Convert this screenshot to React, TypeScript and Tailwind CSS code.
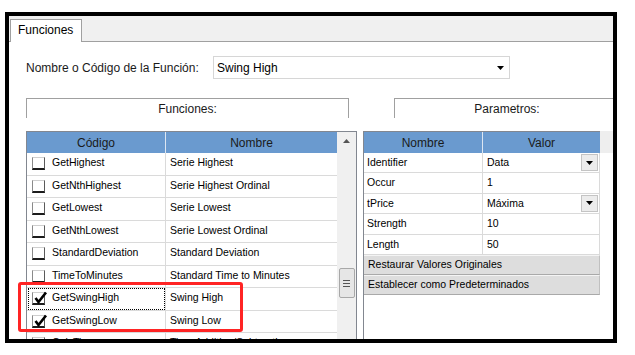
import React from "react";

const funcRows: [string, string, boolean][] = [
  ["GetHighest", "Serie Highest", false],
  ["GetNthHighest", "Serie Highest Ordinal", false],
  ["GetLowest", "Serie Lowest", false],
  ["GetNthLowest", "Serie Lowest Ordinal", false],
  ["StandardDeviation", "Standard Deviation", false],
  ["TimeToMinutes", "Standard Time to Minutes", false],
  ["GetSwingHigh", "Swing High", true],
  ["GetSwingLow", "Swing Low", true],
  ["CalcTime", "Time Addition/Subtraction", false],
];

const paramRows: [string, string, boolean][] = [
  ["Identifier", "Data", true],
  ["Occur", "1", false],
  ["tPrice", "Máxima", true],
  ["Strength", "10", false],
  ["Length", "50", false],
];

function Checkbox({ checked }: { checked: boolean }) {
  return (
    <div className="relative w-[13px] h-[13px] shrink-0 bg-white border-t border-l border-r border-b-2 border-t-[#cfcfcf] border-l-[#8a8a8a] border-r-[#5a5a5a] border-b-[#1c1c1c]">
      {checked && (
        <svg className="absolute left-[1px] top-[-3px]" width="14" height="14" viewBox="0 0 14 14">
          <path d="M1.5 8 L4.5 12 L12 2.5" fill="none" stroke="#000" strokeWidth="2.6" strokeLinejoin="miter" />
        </svg>
      )}
    </div>
  );
}

function DownArrow() {
  return (
    <svg width="7" height="4" viewBox="0 0 7 4">
      <path d="M0 0 H7 L3.5 4 Z" fill="#000" />
    </svg>
  );
}

export default function App() {
  return (
    <div className="relative w-[635px] h-[355px] bg-white overflow-hidden font-['Liberation_Sans',Arial,sans-serif] text-black">
      <div className="pl-[5px] pt-[12px]">
        <div className="w-[612px] h-[331px] border-4 border-black flex flex-col overflow-hidden">
          {/* tab strip */}
          <div className="h-[26px] shrink-0 bg-[#f0f0f0] border-b border-[#a0a0a0] flex items-end pl-[1px]">
            <div className="h-[23px] w-[72px] -mb-px bg-white border border-b-0 border-[#a0a0a0] text-[12px] leading-[20px] pl-[7px]">
              Funciones
            </div>
          </div>
          {/* content */}
          <div className="flex-1 bg-white flex flex-col overflow-hidden">
            <div className="mt-[14px] h-[23px] flex items-center pl-[17px] shrink-0">
              <div className="w-[187px] shrink-0 text-[12px] text-[#1a1a1a]">Nombre o Código de la Función:</div>
              <div className="w-[297px] shrink-0 h-[23px] border border-[#d6d6d6] flex items-center justify-between pl-[3px] pr-[5px] text-[12px]">
                <span>Swing High</span>
                <DownArrow />
              </div>
            </div>
            <div className="mt-[19px] h-[20px] flex pl-[17px] shrink-0 overflow-hidden">
              <div className="w-[323px] shrink-0 h-[20px] border-t border-l border-r border-[#a0a0a0] flex items-center justify-center text-[12px] text-[#1a1a1a]">
                Funciones:
              </div>
              <div className="ml-[45px] w-[226px] shrink-0 h-[20px] border-t border-l border-r border-[#a0a0a0] flex items-center justify-center text-[12px] text-[#1a1a1a]">
                Parametros:
              </div>
            </div>
            <div className="mt-[13px] flex-1 flex pl-[17px] overflow-hidden">
              {/* Funciones grid */}
              <div className="w-[331px] shrink-0 border-t border-l border-r border-[#828790] flex">
                <div className="w-[310px] flex flex-col">
                  <div className="h-[21px] shrink-0 bg-[#6a9acf] flex text-[12px] text-[#1a1a1a]">
                    <div className="w-[138px] flex items-center justify-center">Código</div>
                    <div className="w-px bg-[#dce6f2]" />
                    <div className="flex-1 flex items-center justify-center">Nombre</div>
                  </div>
                  {funcRows.map(([code, name, checked], i) => (
                    <div key={code} className="h-[22.5px] shrink-0 flex border-b border-[#dadada] text-[10.5px] leading-[13px]">
                      <div className="relative w-[138px] flex items-start pl-[5px]">
                        <div className="mt-[4px]">
                          <Checkbox checked={checked} />
                        </div>
                        <span className="ml-[7px] mt-[3px]">{code}</span>
                        {i === 6 && (
                          <div className="absolute left-[1px] right-0 top-0 bottom-0 border border-dotted border-black" />
                        )}
                      </div>
                      <div className="flex-1 border-l border-[#dadada] pl-[4px] pt-[3px]">{name}</div>
                    </div>
                  ))}
                </div>
                {/* scrollbar */}
                <div className="flex-1 bg-[#f0f0f0] flex flex-col items-center">
                  <div className="h-[18px] w-full flex items-center justify-center">
                    <svg width="7" height="4" viewBox="0 0 7 4">
                      <path d="M0 4 H7 L3.5 0 Z" fill="#555" />
                    </svg>
                  </div>
                  <div className="mt-[118px] w-[16px] h-[30px] rounded-[2px] border border-[#a8a8a8] bg-[#e6e6e6] flex flex-col items-center justify-center gap-[2px]">
                    <div className="w-[7px] h-px bg-[#555]" />
                    <div className="w-[7px] h-px bg-[#555]" />
                    <div className="w-[7px] h-px bg-[#555]" />
                  </div>
                </div>
              </div>
              {/* Parametros panel */}
              <div className="ml-[6px] flex-1 border-l border-[#828790] flex">
                <div className="w-[236px] shrink-0 flex flex-col">
                  <div className="h-[22px] shrink-0 bg-[#6a9acf] border-t border-[#828790] flex text-[12px] text-[#1a1a1a]">
                    <div className="w-[118px] flex items-center justify-center">Nombre</div>
                    <div className="w-px bg-[#dce6f2]" />
                    <div className="flex-1 flex items-center justify-center">Valor</div>
                  </div>
                  {paramRows.map(([n, v, dd]) => (
                    <div key={n} className="h-[20.4px] shrink-0 flex border-b border-r border-[#dadada] text-[10.5px] leading-[13px]">
                      <div className="w-[118px] pl-[3px] pt-[3px]">{n}</div>
                      <div className="flex-1 border-l border-[#dadada] pl-[4px] flex items-start justify-between">
                        <span className="pt-[3px]">{v}</span>
                        {dd && (
                          <div className="mt-[1px] mr-[1px] w-[17px] h-[17px] bg-[#ececec] border border-[#c4c4c4] flex items-center justify-center">
                            <DownArrow />
                          </div>
                        )}
                      </div>
                    </div>
                  ))}
                  {["Restaurar Valores Originales", "Establecer como Predeterminados"].map((t) => (
                    <div key={t} className="h-[20px] shrink-0 bg-[#dddddd] border-t border-t-[#f4f4f4] border-b border-b-[#a9a9a9] border-r border-r-[#c0c0c0] text-[10.5px] leading-[13px] pl-[4px] flex items-center">
                      {t}
                    </div>
                  ))}
                </div>
                <div className="flex-1">
                  <div className="h-[22px] bg-[#eeeeee]" />
                </div>
              </div>
            </div>
          </div>
        </div>
      </div>
      {/* red annotation */}
      <div className="absolute left-[18px] top-[282px] w-[225px] h-[50px] border-[3px] border-[#ff2424] rounded-[3px]" />
    </div>
  );
}
